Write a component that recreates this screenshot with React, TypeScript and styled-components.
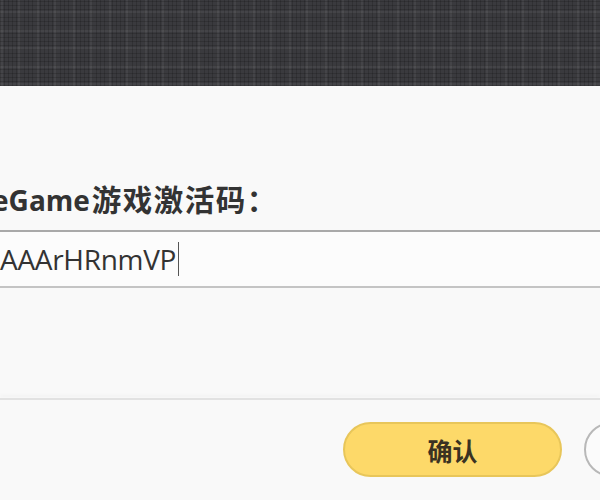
import React from "react";
import styled, { createGlobalStyle } from "styled-components";

const Global = createGlobalStyle`
  html, body { margin: 0; padding: 0; background: #f9f9f9; }
  body { font-family: "Open Sans", "Noto Sans CJK SC", sans-serif; }
`;

const Page = styled.div`
  width: 600px;
  height: 500px;
  overflow: hidden;
  background: #f9f9f9;
  display: flex;
  flex-direction: column;
`;

const Header = styled.div`
  height: 86px;
  flex-shrink: 0;
  background-color: #3a3a3e;
  background-image:
    repeating-linear-gradient(90deg, rgba(0,0,0,0.16) 0 1px, transparent 1px 4px),
    repeating-linear-gradient(0deg, rgba(0,0,0,0.16) 0 1px, transparent 1px 4px),
    repeating-linear-gradient(90deg, rgba(255,255,255,0.05) 0 3px, transparent 3px 18px),
    repeating-linear-gradient(0deg, rgba(255,255,255,0.05) 0 3px, transparent 3px 18px);
`;

const Body = styled.div`
  padding-top: 94px;
  display: flex;
  flex-direction: column;
`;

const Label = styled.div`
  margin-left: -35px;
  font-size: 28px;
  font-weight: 700;
  line-height: 40px;
  color: #333333;
  white-space: nowrap;
`;

const Cjk = styled.span`
  margin-left: 2px;
  font-size: 29.5px;
  letter-spacing: 1.5px;
`;

const Field = styled.div`
  margin-top: 10px;
  height: 54px;
  border-top: 2px solid #a9a9a9;
  border-bottom: 2px solid #c4c4c4;
  background: #fcfcfc;
  display: flex;
  align-items: center;
`;

const FieldText = styled.span`
  font-size: 28px;
  color: #333;
  letter-spacing: -0.3px;
  white-space: nowrap;
`;

const Caret = styled.span`
  display: inline-block;
  width: 1px;
  height: 34px;
  margin-left: 2px;
  background: #555;
`;

const Divider = styled.div`
  margin-top: 110px;
  height: 2px;
  background: #e2e2e2;
  box-shadow: 0 -3px 3px #f2f2f2;
`;

const Footer = styled.div`
  padding: 22px 0 0 343px;
  display: flex;
  gap: 22px;
`;

const Button = styled.button<{ $primary?: boolean }>`
  flex-shrink: 0;
  width: 219px;
  height: 55px;
  border-radius: 28px;
  font-family: "Noto Sans CJK SC", sans-serif;
  font-size: 25px;
  font-weight: 700;
  color: #3a3222;
  border: 2px solid ${(p) => (p.$primary ? "#e8c65a" : "#b8b8b8")};
  background: ${(p) => (p.$primary ? "#fdd969" : "#fbfbfb")};
  padding: 0;
`;

export default function App() {
  return (
    <Page>
      <Global />
      <Header />
      <Body>
        <Label>
          WeGame<Cjk>游戏激活码：</Cjk>
        </Label>
        <Field>
          <FieldText>AAArHRnmVP</FieldText>
          <Caret />
        </Field>
        <Divider />
        <Footer>
          <Button $primary>确认</Button>
          <Button>取消</Button>
        </Footer>
      </Body>
    </Page>
  );
}
